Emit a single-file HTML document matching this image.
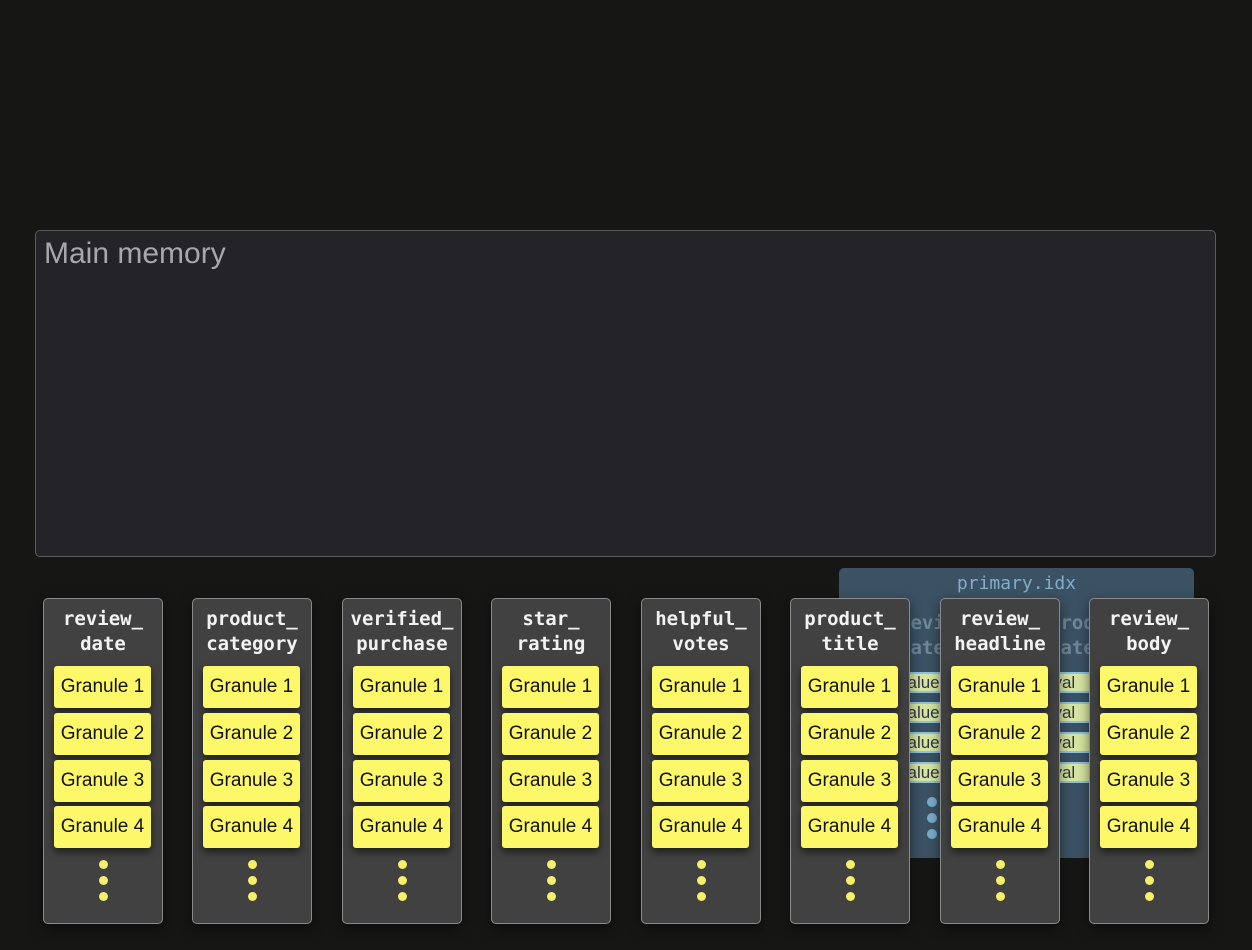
<!DOCTYPE html>
<html><head><style>
body{margin:0;width:1252px;height:950px;background:#161615;position:relative;overflow:hidden;font-family:"Liberation Sans",sans-serif}
.mm{position:absolute;left:35px;top:230px;width:1181px;height:327px;background:#232328;border:1px solid #5c5c60;border-radius:5px;box-sizing:border-box}
.mm span{position:absolute;left:8px;top:6px;color:#a8a8aa;font-size:30px}
.idx{position:absolute;left:839px;top:568px;width:355px;height:290px;background:#3b5264;border-radius:5px}
.idx .t{position:absolute;top:5px;width:100%;text-align:center;color:#82acc8;font:18px "DejaVu Sans Mono",monospace}
.idx .h{position:absolute;color:#6e8898;font:bold 19px/25px "DejaVu Sans Mono",monospace}
.v{position:absolute;height:17px;background:#d6e6a2;border-top:2px solid #8fc4e0;border-bottom:2px solid #8fc4e0;color:#334;font-size:17px;line-height:17px;overflow:hidden}
.bd{position:absolute;width:10px;height:10px;border-radius:50%;background:#7aaccb}
.col{position:absolute;top:598px;width:120px;height:326px;background:#414141;border:1px solid #8a8a8a;border-radius:5px;box-sizing:border-box;box-shadow:0 4px 12px rgba(0,0,0,.5)}
.col .n{position:absolute;top:8px;width:100%;text-align:center;color:#f2f2f2;font:bold 19px/25px "DejaVu Sans Mono",monospace}
.g{position:absolute;left:10px;width:97px;height:42px;background:#fcf869;border-radius:3px;box-shadow:0 4px 8px rgba(0,0,0,.55);text-align:center;line-height:42px;font-size:19px;color:#111}
.d{position:absolute;left:55px;width:9px;height:9px;border-radius:50%;background:#f5f06a}
</style></head><body>
<div class="mm"><span>Main memory</span></div>
<div class="idx"><div class="t">primary.idx</div>
<div class="h" style="left:60px;top:43px">revie<br>date</div>
<div class="h" style="left:210px;top:43px">produ<br>categ</div>
<div class="v" style="left:60px;top:104px;width:60px">value</div>
<div class="v" style="left:60px;top:134px;width:60px">value</div>
<div class="v" style="left:60px;top:164px;width:60px">value</div>
<div class="v" style="left:60px;top:194px;width:60px">value</div>
<div class="v" style="left:205px;top:104px;width:60px">t val</div>
<div class="v" style="left:205px;top:134px;width:60px">t val</div>
<div class="v" style="left:205px;top:164px;width:60px">t val</div>
<div class="v" style="left:205px;top:194px;width:60px">t val</div>
<div class="bd" style="left:88px;top:229px"></div>
<div class="bd" style="left:88px;top:245px"></div>
<div class="bd" style="left:88px;top:261px"></div>
</div>
<div class="col" style="left:43px"><div class="n">review_<br>date</div><div class="g" style="top:67px">Granule 1</div><div class="g" style="top:114px">Granule 2</div><div class="g" style="top:161px">Granule 3</div><div class="g" style="top:207px">Granule 4</div><div class="d" style="top:261px"></div><div class="d" style="top:277px"></div><div class="d" style="top:293px"></div></div>
<div class="col" style="left:192px"><div class="n">product_<br>category</div><div class="g" style="top:67px">Granule 1</div><div class="g" style="top:114px">Granule 2</div><div class="g" style="top:161px">Granule 3</div><div class="g" style="top:207px">Granule 4</div><div class="d" style="top:261px"></div><div class="d" style="top:277px"></div><div class="d" style="top:293px"></div></div>
<div class="col" style="left:342px"><div class="n">verified_<br>purchase</div><div class="g" style="top:67px">Granule 1</div><div class="g" style="top:114px">Granule 2</div><div class="g" style="top:161px">Granule 3</div><div class="g" style="top:207px">Granule 4</div><div class="d" style="top:261px"></div><div class="d" style="top:277px"></div><div class="d" style="top:293px"></div></div>
<div class="col" style="left:491px"><div class="n">star_<br>rating</div><div class="g" style="top:67px">Granule 1</div><div class="g" style="top:114px">Granule 2</div><div class="g" style="top:161px">Granule 3</div><div class="g" style="top:207px">Granule 4</div><div class="d" style="top:261px"></div><div class="d" style="top:277px"></div><div class="d" style="top:293px"></div></div>
<div class="col" style="left:641px"><div class="n">helpful_<br>votes</div><div class="g" style="top:67px">Granule 1</div><div class="g" style="top:114px">Granule 2</div><div class="g" style="top:161px">Granule 3</div><div class="g" style="top:207px">Granule 4</div><div class="d" style="top:261px"></div><div class="d" style="top:277px"></div><div class="d" style="top:293px"></div></div>
<div class="col" style="left:790px"><div class="n">product_<br>title</div><div class="g" style="top:67px">Granule 1</div><div class="g" style="top:114px">Granule 2</div><div class="g" style="top:161px">Granule 3</div><div class="g" style="top:207px">Granule 4</div><div class="d" style="top:261px"></div><div class="d" style="top:277px"></div><div class="d" style="top:293px"></div></div>
<div class="col" style="left:940px"><div class="n">review_<br>headline</div><div class="g" style="top:67px">Granule 1</div><div class="g" style="top:114px">Granule 2</div><div class="g" style="top:161px">Granule 3</div><div class="g" style="top:207px">Granule 4</div><div class="d" style="top:261px"></div><div class="d" style="top:277px"></div><div class="d" style="top:293px"></div></div>
<div class="col" style="left:1089px"><div class="n">review_<br>body</div><div class="g" style="top:67px">Granule 1</div><div class="g" style="top:114px">Granule 2</div><div class="g" style="top:161px">Granule 3</div><div class="g" style="top:207px">Granule 4</div><div class="d" style="top:261px"></div><div class="d" style="top:277px"></div><div class="d" style="top:293px"></div></div>
</body></html>
